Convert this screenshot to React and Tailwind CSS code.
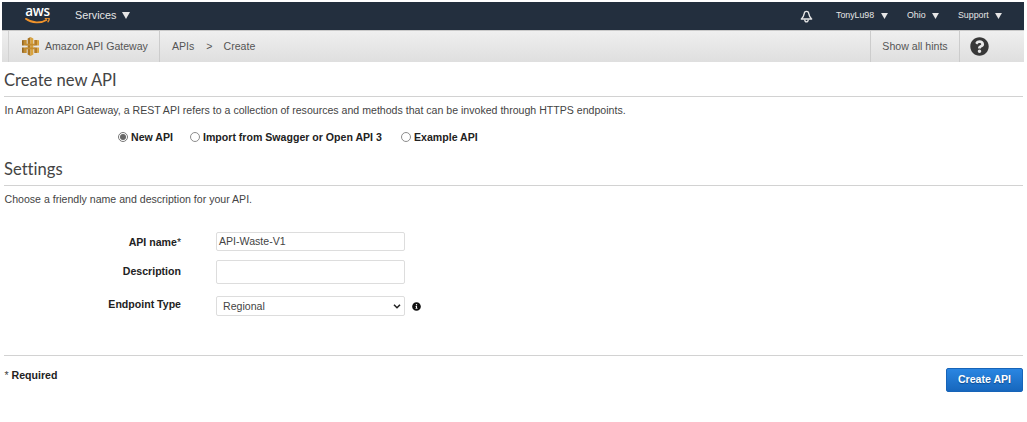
import React from 'react';
import { FaQuestionCircle, FaInfoCircle } from 'react-icons/fa';

const Caret = ({ className = 'h-[7px] w-[8px]' }) => (
  <svg viewBox="0 0 8 7" className={className} fill="currentColor" aria-hidden="true">
    <path d="M0 0h8L4 7z" />
  </svg>
);

function AwsLogo() {
  return (
    <div className="flex w-[25px] flex-col items-center text-white">
      <span className="font-['Open_Sans',sans-serif] text-[13.5px] leading-[11px] font-semibold tracking-[-0.3px]">aws</span>
      <svg viewBox="0 0 25 7" className="mt-[1px] h-[7px] w-[25px]" fill="none" stroke="#f0932b" aria-hidden="true">
        <path d="M0.3 0.3C7 5.400 15.5 5.700 22 1.700" strokeWidth="1.8" />
        <path d="M19.8 .7c1.600-.6 3.500-.6 4.300-.2.2 1-.4 2.800-1.500 3.800" strokeWidth="1.3" />
      </svg>
    </div>
  );
}

function GatewayIcon() {
  return (
    <svg viewBox="0 0 18 20" className="h-[19px] w-[17px]" aria-hidden="true">
      <path d="M6 1.500 9 0v20l-3-1.500z" fill="#ad7723" />
      <path d="m9 0 3 1.500v17L9 20z" fill="#d9a33d" />
      <path d="M0 3.500 2 3v6H0zM0 11h2v6l-2-.5z" fill="#9a681c" />
      <path d="M2 3h3v6H2zM2 11h3v6H2z" fill="#c28c31" />
      <path d="M13 3h3v6h-3zM13 11h3v6h-3z" fill="#b57d28" />
      <path d="m16 3 2 .5V9h-2zM16 11h2v5.500l-2 .5z" fill="#d9a33d" />
      <path d="M4 7h10v2H4zM4 11h10v2H4z" fill="#c28c31" />
    </svg>
  );
}

function BellIcon() {
  return (
    <svg viewBox="0 0 13 14" className="h-[13px] w-[13px]" fill="none" stroke="currentColor" strokeWidth="1.4" strokeLinejoin="round" aria-hidden="true">
      <path d="M6.500 1.500C4.800 1.500 4 2.800 3.900 4.500 3.700 6.800 2.500 8 .9 9.700h11.200C10.500 8 9.300 6.800 9.100 4.500 9 2.800 8.200 1.500 6.500 1.500z" />
      <path d="M4.600 10.200c0 3.500 3.800 3.500 3.800 0" />
    </svg>
  );
}

function Radio({ checked, label, className }) {
  return (
    <div role="radio" aria-checked={checked} className={`flex items-center ${className}`}>
      <span className={`-mt-[2px] flex size-[10px] items-center justify-center rounded-full border bg-white ${checked ? 'border-[#777]' : 'border-[#8d8d8d]'}`}>
        {checked && <span className="size-[6px] rounded-full bg-[#666]" />}
      </span>
      <span className="ml-[3px] whitespace-nowrap">{label}</span>
    </div>
  );
}

export default function App() {
  return (
    <div className="h-[422px] w-[1027px] overflow-hidden bg-white pt-[2px] pl-[2px] font-['Liberation_Sans',Arial,sans-serif] text-[10.58px] text-[#444]">
      <header className="flex h-[28px] w-[1022px] items-center bg-[#232f3e] text-[#e6e6e6]">
        <div className="-mt-[1px] ml-[23px]"><AwsLogo /></div>
        <div className="-mt-[2px] ml-[25px] flex w-[55px] items-center justify-between text-[10.8px]">
          <span>Services</span><Caret />
        </div>
        <div className="ml-auto flex h-full items-center text-[8.8px]">
          <BellIcon />
          <div className="-mt-[1px] ml-[23px] flex w-[52px] items-center justify-between"><span>TonyLu98</span><Caret className="h-[6px] w-[7px]" /></div>
          <div className="-mt-[1px] ml-[19px] flex w-[32px] items-center justify-between"><span>Ohio</span><Caret className="h-[6px] w-[7px]" /></div>
          <div className="-mt-[1px] mr-[22px] ml-[19px] flex w-[44px] items-center justify-between"><span>Support</span><Caret className="h-[6px] w-[7px]" /></div>
        </div>
      </header>

      <nav className="flex h-[32px] w-[1022px] items-center border-t border-[#c9c9c9] bg-linear-to-b from-[#efefef] to-[#dfdfdf] text-[#555]">
        <div className="ml-[6px] flex h-full w-[151px] items-center border-l border-[#d2d2d2] pb-[1px] pl-[13px]">
          <GatewayIcon />
          <span className="mt-[2px] ml-[6px] whitespace-nowrap">Amazon API Gateway</span>
        </div>
        <div className="flex h-full items-center border-l border-[#cccccc] pt-[1px] pl-[12px]">
          <span>APIs</span><span className="ml-[12px]">&gt;</span><span className="ml-[11px]">Create</span>
        </div>
        <div className="ml-auto flex h-full w-[89px] items-center justify-center border-l border-[#cccccc] pt-[1px]">Show all hints</div>
        <div className="flex h-full w-[65px] items-center border-l border-[#cccccc] pb-[1px] pl-[10px]">
          <FaQuestionCircle className="size-[19px] text-[#383838]" />
        </div>
      </nav>

      <main className="w-[1021px] pl-[2px]">
        <h1 className="flex h-[35px] items-center border-b border-[#d2d2d2] pt-[3px] font-['Lato',sans-serif] text-[16.6px] text-[#444]"><span>Create new API</span></h1>
        <p className="mt-[7px] h-[13px] pl-[0.5px] leading-[13px] whitespace-nowrap"><span>In Amazon API Gateway, a REST API refers to a collection of resources and methods that can be invoked through HTTPS endpoints.</span></p>
        <div role="radiogroup" className="mt-[12px] flex h-[17px] pl-[114px] font-bold text-[#222]">
          <Radio checked label="New API" className="w-[72px]" />
          <Radio checked={false} label="Import from Swagger or Open API 3" className="w-[211px]" />
          <Radio checked={false} label="Example API" className="w-[90px]" />
        </div>
        <h2 className="flex h-[40px] items-center border-b border-[#d2d2d2] pt-[8px] font-['Lato',sans-serif] text-[16.6px] text-[#444] [font-variant-ligatures:none]"><span>Settings</span></h2>
        <p className="mt-[7px] h-[13px] pl-[0.5px] leading-[13px]"><span>Choose a friendly name and description for your API.</span></p>

        <form className="mt-[26px]">
          <div className="flex h-[20px]">
            <label className="w-[177px] pt-[4px] text-right leading-[13px] font-bold text-[#222]">API name<span className="font-normal">*</span></label>
            <div className="ml-[35px] flex h-[19px] w-[189px] items-center rounded-[2px] border border-[#ddd] pt-[1px] pl-[2px]">API-Waste-V1</div>
          </div>
          <div className="mt-[8px] flex h-[24px]">
            <label className="w-[177px] pt-[5px] text-right leading-[13px] font-bold text-[#222]">Description</label>
            <div className="ml-[35px] h-[24px] w-[189px] rounded-[2px] border border-[#ddd]" />
          </div>
          <div className="mt-[12px] flex h-[20px]">
            <label className="w-[177px] pt-[2px] text-right leading-[13px] font-bold text-[#222]">Endpoint Type</label>
            <div className="ml-[35px] flex h-[20px] w-[189px] items-center justify-between rounded-[2px] border border-[#ddd] pt-[1px] pr-[3px] pl-[6px]">
              <span>Regional</span>
              <svg viewBox="0 0 8 5" className="h-[5px] w-[8px]" fill="none" stroke="#222" strokeWidth="1.6" aria-hidden="true"><path d="m1 .7 3 3 3-3" /></svg>
            </div>
            <FaInfoCircle className="mt-[6px] ml-[7px] size-[9px] text-[#111]" />
          </div>
        </form>

        <footer className="mt-[39px] flex justify-between border-t border-[#d2d2d2] pt-[12px]">
          <p className="pt-[1px] pl-[0.5px] leading-[13px]">* <span className="font-bold text-[#222]">Required</span></p>
          <button type="button" className="h-[24px] w-[77px] rounded-[2px] border border-[#1764b8] bg-linear-to-b from-[#2a86e2] to-[#1767bd] font-bold whitespace-nowrap text-white [text-shadow:0_1px_1px_#0d4a8f]">Create API</button>
        </footer>
      </main>
    </div>
  );
}
